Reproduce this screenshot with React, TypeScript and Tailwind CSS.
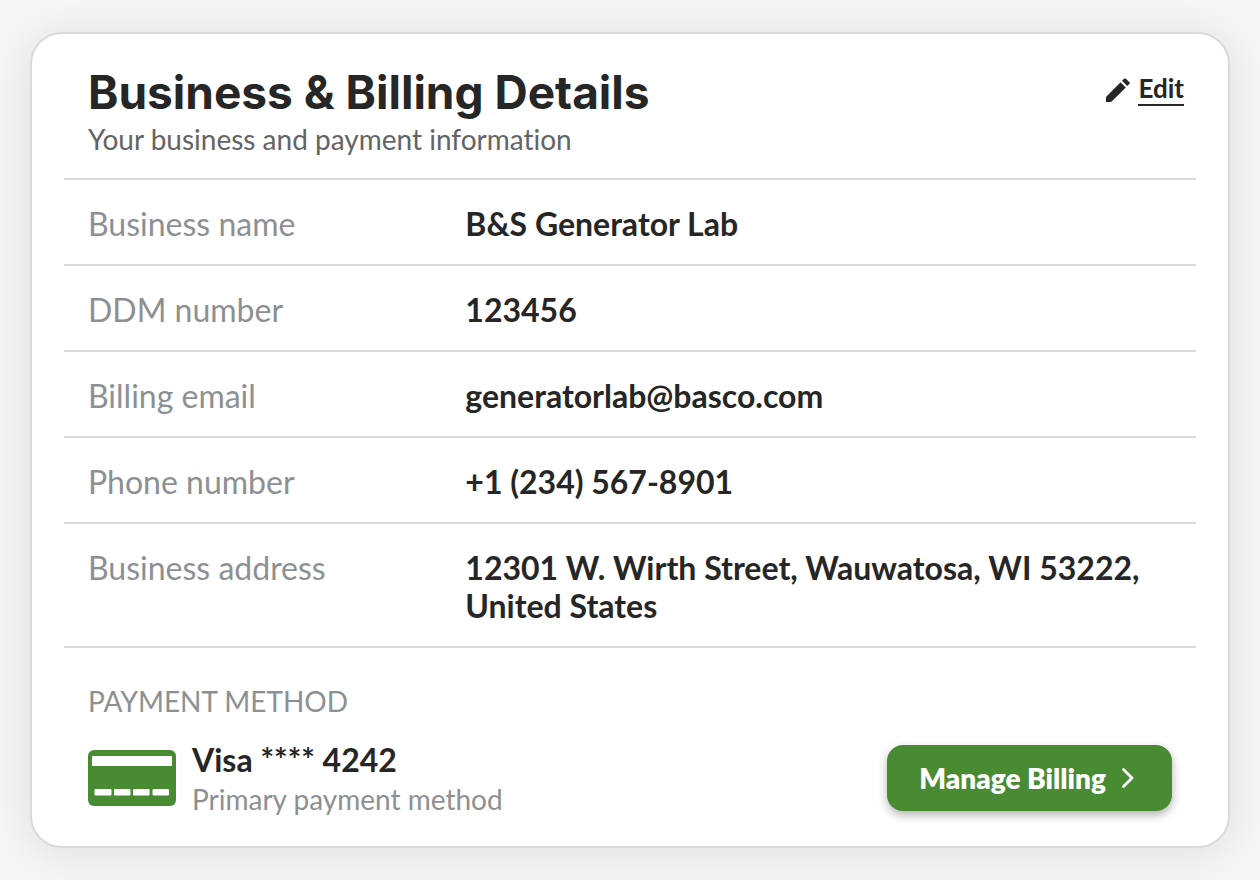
const details = [
  { label: "Business name", value: "B&S Generator Lab" },
  { label: "DDM number", value: "123456" },
  { label: "Billing email", value: "generatorlab@basco.com" },
  { label: "Phone number", value: "+1 (234) 567-8901" },
  {
    label: "Business address",
    value: "12301 W. Wirth Street, Wauwatosa, WI 53222, United States",
  },
];

function PencilIcon() {
  return (
    <svg viewBox="0 0 24 24" className="size-6 shrink-0" fill="currentColor" aria-hidden="true">
      <path d="M0 24v-4.200q0-.9.7-1.600L14.600 4.300l5.200 5.200L5.900 23.300q-.7.7-1.600.7H0zM21.200 8l-5.200-5.200L18.100.7q.9-.9 1.800 0l3.400 3.400q.9.900 0 1.800L21.200 8z" />
    </svg>
  );
}

function CardIcon() {
  return (
    <svg viewBox="0 0 88 56" className="h-14 w-22 shrink-0" aria-hidden="true">
      <rect width="88" height="56" rx="6" fill="#488b32" />
      <g fill="#fff">
        <rect x="4" y="6" width="80" height="10" />
        <rect x="6.5" y="39" width="17" height="6.5" rx="1" />
        <rect x="26" y="39" width="16.5" height="6.5" rx="1" />
        <rect x="45" y="39" width="16.5" height="6.5" rx="1" />
        <rect x="64.5" y="39" width="16.5" height="6.5" rx="1" />
      </g>
    </svg>
  );
}

function ChevronIcon() {
  return (
    <svg
      viewBox="0 0 12 20"
      className="h-5 w-3 shrink-0"
      fill="none"
      stroke="currentColor"
      strokeWidth="2.8"
      strokeLinecap="round"
      strokeLinejoin="round"
      aria-hidden="true"
    >
      <path d="M1.5 1.5 10 10l-8.500 8.500" />
    </svg>
  );
}

export default function App() {
  return (
    <main className="min-h-screen bg-[#f6f6f8] px-[30px] py-8 font-['Lato',sans-serif] text-[#262626] [font-variant-ligatures:none]">
      <section className="rounded-[32px] border-2 border-[#d9dadb] bg-white px-8 pt-8 pb-7 shadow-[0_4px_48px_rgba(0,0,0,0.1)]">
        <header className="flex items-start justify-between border-b-2 border-[#d9dadb] pt-0.5 pr-3 pb-[21px] pl-6">
          <div>
            <h1 className="font-['Inter',sans-serif] text-[46px] leading-[48px] font-bold">
              Business &amp; Billing Details
            </h1>
            <p className="mt-[5px] text-[28px] leading-[36px] text-[#636466]">
              Your business and payment information
            </p>
          </div>
          <a href="#edit" className="mt-[5px] flex items-center gap-2 text-[26px] leading-[31px] font-bold">
            <PencilIcon />
            <span className="border-b-2 border-current">Edit</span>
          </a>
        </header>

        <dl>
          {details.map(({ label, value }) => (
            <div
              key={label}
              className="grid grid-cols-3 border-b-2 border-[#d9dadb] pt-[25px] pb-[21px] text-[32px] leading-[38px]"
            >
              <dt className="pl-6 text-[#8d9093]">{label}</dt>
              <dd className="col-span-2 pr-6 pl-6 font-bold">{value}</dd>
            </div>
          ))}
        </dl>

        <h2 className="mt-[35px] pl-6 text-[28px] leading-[36px] text-[#8d9093] uppercase">
          Payment method
        </h2>
        <div className="mt-[18px] flex items-center justify-between px-6">
          <div className="flex items-center gap-4">
            <CardIcon />
            <div className="pt-[3px]">
              <p className="text-[32px] leading-[40px] font-bold">Visa **** 4242</p>
              <p className="text-[28px] leading-[38px] text-[#8d9093]">Primary payment method</p>
            </div>
          </div>
          <button
            type="button"
            className="flex h-[66px] items-center gap-4 rounded-2xl bg-[#488b32] pr-[38px] pl-8 text-[28px] font-extrabold text-white shadow-[0_4px_10px_rgba(0,0,0,0.3)]"
          >
            Manage Billing
            <ChevronIcon />
          </button>
        </div>
      </section>
    </main>
  );
}
